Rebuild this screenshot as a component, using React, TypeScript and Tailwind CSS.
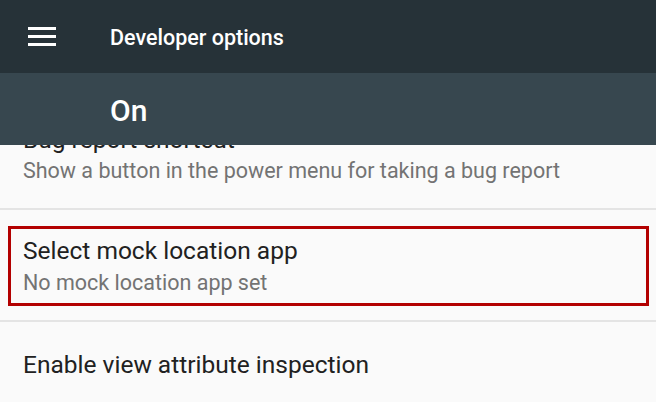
const Divider = () => <div className="h-[2px] w-full shrink-0 bg-[#e4e4e4]" />;

export default function App() {
	return (
		<div className="flex h-[402px] w-[656px] flex-col overflow-hidden bg-[#fafafa] font-['Roboto',sans-serif]">
			<header className="relative z-10 flex shrink-0 flex-col">
				<div className="flex h-[73px] items-center bg-[#263238]">
					<svg className="ml-[28px] -mt-[1px]" width="28" height="19" viewBox="0 0 28 19" fill="#fff">
						<rect x="0" y="0" width="28" height="3" />
						<rect x="0" y="8" width="28" height="3" />
						<rect x="0" y="16" width="28" height="3" />
					</svg>
					<span className="mt-[3px] ml-[54px] text-[21.5px] font-medium text-white">Developer options</span>
				</div>
				<div className="flex h-[72px] items-center bg-[#37474f] pl-[110px] pt-[4px]">
					<span className="text-[30px] font-medium leading-none text-white">On</span>
				</div>
			</header>

			<div className="-mt-[20px] flex shrink-0 flex-col pl-[23px]">
				<div className="text-[24.5px] leading-[30px] text-[#212121]">Bug report shortcut</div>
				<div className="mt-[2px] text-[21.5px] leading-[27px] text-[#737373]">
					Show a button in the power menu for taking a bug report
				</div>
			</div>
			<div className="mt-[24px] shrink-0">
				<Divider />
			</div>

			<div className="mt-[16px] mr-[7px] ml-[8px] flex h-[80px] shrink-0 flex-col justify-center border-[3px] border-[#b30000] pl-[12px]">
				<div className="text-[24.5px] leading-[30px] text-[#212121]">Select mock location app</div>
				<div className="mt-[3px] text-[21.5px] leading-[27px] text-[#737373]">No mock location app set</div>
			</div>
			<div className="mt-[14px] shrink-0">
				<Divider />
			</div>

			<div className="flex h-[86px] shrink-0 items-center pl-[23px]">
				<span className="text-[24.5px] leading-[30px] text-[#212121]">Enable view attribute inspection</span>
			</div>
		</div>
	);
}
